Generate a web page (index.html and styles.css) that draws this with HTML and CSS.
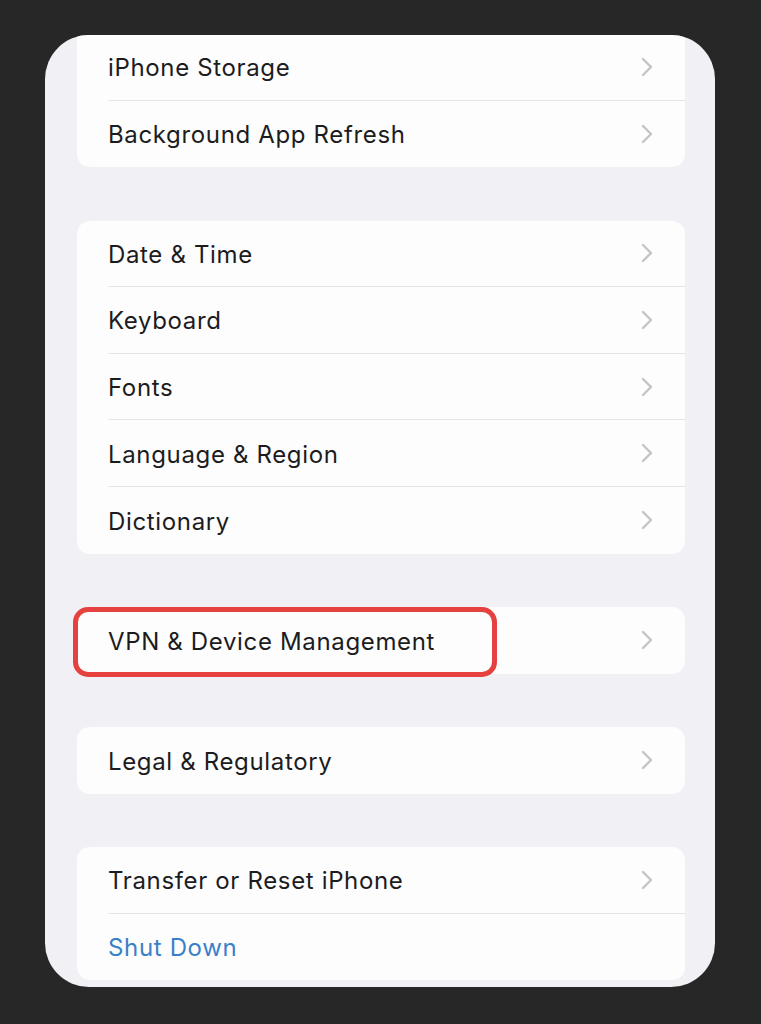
FILE: index.html
```html
<!DOCTYPE html>
<html>
<head>
<meta charset="utf-8">
<link rel="stylesheet" href="styles.css">
</head>
<body>
<div class="frame">
  <div class="group first">
    <div class="row"><div class="row-inner"><span class="label">iPhone Storage</span><svg class="chev" viewBox="0 0 12 20"><path d="M2 2 L10 10 L2 18"/></svg></div></div>
    <div class="row last"><div class="row-inner"><span class="label">Background App Refresh</span><svg class="chev" viewBox="0 0 12 20"><path d="M2 2 L10 10 L2 18"/></svg></div></div>
  </div>
  <div class="group">
    <div class="row"><div class="row-inner"><span class="label">Date &amp; Time</span><svg class="chev" viewBox="0 0 12 20"><path d="M2 2 L10 10 L2 18"/></svg></div></div>
    <div class="row"><div class="row-inner"><span class="label">Keyboard</span><svg class="chev" viewBox="0 0 12 20"><path d="M2 2 L10 10 L2 18"/></svg></div></div>
    <div class="row"><div class="row-inner"><span class="label">Fonts</span><svg class="chev" viewBox="0 0 12 20"><path d="M2 2 L10 10 L2 18"/></svg></div></div>
    <div class="row"><div class="row-inner"><span class="label">Language &amp; Region</span><svg class="chev" viewBox="0 0 12 20"><path d="M2 2 L10 10 L2 18"/></svg></div></div>
    <div class="row last"><div class="row-inner"><span class="label">Dictionary</span><svg class="chev" viewBox="0 0 12 20"><path d="M2 2 L10 10 L2 18"/></svg></div></div>
  </div>
  <div class="group">
    <div class="row last"><div class="row-inner"><span class="label">VPN &amp; Device Management</span><svg class="chev" viewBox="0 0 12 20"><path d="M2 2 L10 10 L2 18"/></svg></div></div>
    <div class="highlight"></div>
  </div>
  <div class="group">
    <div class="row last"><div class="row-inner"><span class="label">Legal &amp; Regulatory</span><svg class="chev" viewBox="0 0 12 20"><path d="M2 2 L10 10 L2 18"/></svg></div></div>
  </div>
  <div class="group">
    <div class="row"><div class="row-inner"><span class="label">Transfer or Reset iPhone</span><svg class="chev" viewBox="0 0 12 20"><path d="M2 2 L10 10 L2 18"/></svg></div></div>
    <div class="row last"><div class="row-inner"><span class="label blue">Shut Down</span></div></div>
  </div>
</div>
</body>
</html>
```

FILE: styles.css
```css
html, body {
  margin: 0;
  padding: 0;
  background: #272727;
}
body {
  width: 761px;
  height: 1024px;
  padding-top: 35px;
  box-sizing: border-box;
  font-family: Inter, "Liberation Sans", sans-serif;
}
.frame {
  margin-left: 45px;
  width: 670px;
  height: 952px;
  background: #f1f1f5;
  border-radius: 44px;
  overflow: hidden;
  box-sizing: border-box;
  padding: 0 30px 0 32px;
  display: flex;
  flex-direction: column;
  gap: 53.4px;
}
.group {
  background: #fdfdfd;
  border-radius: 13px;
  position: relative;
}
.group.first {
  margin-top: -13px;
  padding-top: 12px;
}
.row {
  height: 66.6px;
  padding-left: 31px;
  box-sizing: border-box;
}
.row-inner {
  height: 100%;
  box-sizing: border-box;
  display: flex;
  align-items: center;
  justify-content: space-between;
  padding-right: 32px;
  border-bottom: 1px solid #e6e6ea;
}
.row.last .row-inner {
  border-bottom: none;
}
.label {
  font-size: 24px;
  color: #1c1c1e;
  letter-spacing: 0.65px;
  padding-top: 2px;
}
.label.blue {
  color: #3a80c8;
}
.chev {
  width: 12px;
  height: 20px;
  fill: none;
  stroke: #c4c4c8;
  stroke-width: 2.4;
  stroke-linecap: round;
  stroke-linejoin: round;
}
.highlight {
  position: absolute;
  left: -4px;
  top: 0px;
  width: 424px;
  height: 70px;
  box-sizing: border-box;
  border: 5px solid #e5413f;
  border-radius: 15px;
}
```
